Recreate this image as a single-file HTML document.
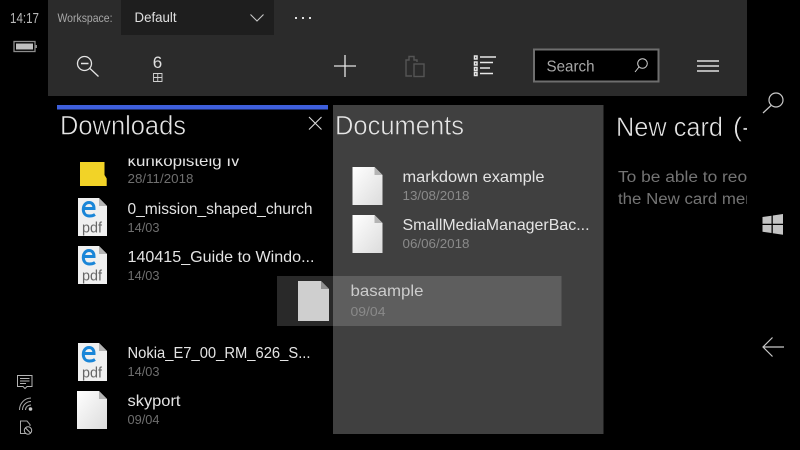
<!DOCTYPE html>
<html><head><meta charset="utf-8"><style>
html,body{margin:0;padding:0;background:#000;width:800px;height:450px;overflow:hidden}
svg{display:block;filter:blur(.35px)}
text{font-family:"Liberation Sans",sans-serif}
.h{stroke:#000;stroke-width:.55px;paint-order:normal}
.h2{stroke:#404040;stroke-width:.55px}
</style></head><body>
<svg width="800" height="450" viewBox="0 0 800 450" xmlns="http://www.w3.org/2000/svg">
<defs>
<linearGradient id="pg" x1="0" y1="0" x2="1" y2="1"><stop offset="0" stop-color="#fff"/><stop offset="1" stop-color="#dcdcdc"/></linearGradient>
<symbol id="doc" viewBox="0 0 30 38" overflow="visible">
<path d="M0 0H22L30 8V38H0Z" fill="url(#pg)"/><path d="M22 0L30 8H22Z" fill="#b4b4b4"/>
</symbol>
<symbol id="pdf" viewBox="0 0 29 38" overflow="visible">
<path d="M0 0H21L29 8V38H0Z" fill="#f0f0f0"/><path d="M21 0L29 8H21Z" fill="#b4b4b4"/>
<path d="M5.500 10.500H16C16 6.500 14 4.500 11 4.500C7.500 4.500 5.300 7.500 5.300 11.500C5.300 15.500 7.800 18 11.500 18C13.500 18 15.500 17.500 17 16.500" fill="none" stroke="#1a86d8" stroke-width="3"/>
<text x="14" y="34.500" font-size="15" fill="#666" text-anchor="middle" textLength="20" lengthAdjust="spacingAndGlyphs">pdf</text>
</symbol>
<clipPath id="c1"><rect x="60" y="158.500" width="270" height="20"/></clipPath>
<clipPath id="c3"><rect x="604" y="100" width="143" height="340"/></clipPath>
</defs>

<rect width="800" height="450" fill="#000"/>
<rect x="48" y="0" width="699" height="96" fill="#2b2b2b"/>
<rect x="121" y="0" width="153" height="35" fill="#1e1e1e"/>

<text x="10" y="23" font-size="15" fill="#b8b8b8" textLength="29" lengthAdjust="spacingAndGlyphs">14:17</text>
<rect x="14" y="41.500" width="21" height="10" fill="none" stroke="#8c8c8c" stroke-width="1.300"/>
<rect x="16" y="43.500" width="17" height="6" fill="#c0c0c0"/>
<rect x="35.500" y="45" width="1.500" height="3" fill="#8c8c8c"/>

<text x="57.500" y="22" font-size="12" fill="#a8a8a8" textLength="55" lengthAdjust="spacingAndGlyphs">Workspace:</text>
<text x="134.500" y="22" font-size="14" fill="#e0e0e0" textLength="42" lengthAdjust="spacingAndGlyphs">Default</text>
<path d="M250.500 14.500L257 21L263.500 14.500" fill="none" stroke="#c8c8c8" stroke-width="1.100"/>
<g fill="#e0e0e0"><rect x="295" y="17" width="2" height="2"/><rect x="302" y="17" width="2" height="2"/><rect x="309" y="17" width="2" height="2"/></g>

<circle cx="84.500" cy="63.500" r="7" fill="none" stroke="#e4e4e4" stroke-width="1.300"/>
<path d="M81 63.500H88.500" stroke="#e4e4e4" stroke-width="1.500"/>
<path d="M90 68.500L98.500 76.500" stroke="#e4e4e4" stroke-width="1.300"/>
<text x="157.500" y="68" font-size="17" fill="#e0e0e0" text-anchor="middle">6</text>
<path d="M153.500 73.500H162V81.500H153.500ZM157.750 73.500V81.500M153.500 77.500H162" fill="none" stroke="#d0d0d0" stroke-width="0.900"/>

<path d="M345 55V77M334 66H356" stroke="#e4e4e4" stroke-width="1.300"/>
<g fill="none" stroke="#555" stroke-width="1.400">
<path d="M417 62V60H414V56.500H409V60H406V76H412"/><rect x="414" y="64" width="10" height="12.500"/>
</g>
<g fill="none" stroke="#e8e8e8" stroke-width="1.500">
<rect x="474.500" y="56" width="2.500" height="3"/><rect x="474.500" y="62" width="2.500" height="3"/><rect x="474.500" y="67.500" width="2.500" height="3"/><rect x="474.500" y="72.500" width="2.500" height="3"/>
<path d="M480 57H496M480 62.500H493M480 68H490M480 73.500H493"/>
</g>

<rect x="534" y="49.500" width="124.500" height="32" fill="#000" stroke="#6e6e6e" stroke-width="2"/>
<text x="546.500" y="71.500" font-size="16" fill="#a8a8a8" textLength="48" lengthAdjust="spacingAndGlyphs">Search</text>
<circle cx="642.500" cy="63.500" r="4.800" fill="none" stroke="#d0d0d0" stroke-width="1"/>
<path d="M639 67L635 72" stroke="#d0d0d0" stroke-width="1"/>

<path d="M697 61H719M697 66H719M697 71H719" stroke="#e0e0e0" stroke-width="1.400"/>

<!-- Downloads column -->
<rect x="57" y="105" width="271" height="4.500" fill="#3e5fdc"/>
<text class="h" x="60" y="134.500" font-size="27" fill="#e6e6e6" textLength="126" lengthAdjust="spacingAndGlyphs">Downloads</text>
<path d="M309 117L321.500 129.500M321.500 117L309 129.500" stroke="#d8d8d8" stroke-width="1.100"/>

<g clip-path="url(#c1)">
<text x="127.500" y="166" font-size="16" fill="#e4e4e4" textLength="112" lengthAdjust="spacingAndGlyphs">kuhkopisteig Iv</text>
</g>
<path d="M80 162H104.500V175L106.700 178.500V186H80Z" fill="#f2d327"/>
<text x="127.500" y="183" font-size="13" fill="#6f6f6f" textLength="66" lengthAdjust="spacingAndGlyphs">28/11/2018</text>

<use href="#pdf" x="78" y="198" width="29" height="38"/>
<text x="127.500" y="214" font-size="16" fill="#e4e4e4" textLength="185" lengthAdjust="spacingAndGlyphs">0_mission_shaped_church</text>
<text x="127.500" y="232" font-size="13" fill="#6f6f6f" textLength="32" lengthAdjust="spacingAndGlyphs">14/03</text>

<use href="#pdf" x="78" y="246" width="29" height="38"/>
<text x="127.500" y="262" font-size="16" fill="#e4e4e4" textLength="187" lengthAdjust="spacingAndGlyphs">140415_Guide to Windo...</text>
<text x="127.500" y="280" font-size="13" fill="#6f6f6f" textLength="32" lengthAdjust="spacingAndGlyphs">14/03</text>

<use href="#pdf" x="78" y="343" width="29" height="38"/>
<text x="127.500" y="358" font-size="16" fill="#e4e4e4" textLength="183" lengthAdjust="spacingAndGlyphs">Nokia_E7_00_RM_626_S...</text>
<text x="127.500" y="376" font-size="13" fill="#6f6f6f" textLength="32" lengthAdjust="spacingAndGlyphs">14/03</text>

<use href="#doc" x="77" y="391" width="30" height="38"/>
<text x="127.500" y="406" font-size="16" fill="#e4e4e4" textLength="53" lengthAdjust="spacingAndGlyphs">skyport</text>
<text x="127.500" y="424" font-size="13" fill="#6f6f6f" textLength="32" lengthAdjust="spacingAndGlyphs">09/04</text>

<!-- Documents column -->
<rect x="333" y="105" width="270.500" height="329" fill="#404040"/>
<text class="h2" x="335" y="134.500" font-size="27" fill="#e6e6e6" textLength="129" lengthAdjust="spacingAndGlyphs">Documents</text>

<use href="#doc" x="352.500" y="167" width="30" height="38"/>
<text x="402.500" y="182" font-size="16" fill="#e4e4e4" textLength="142" lengthAdjust="spacingAndGlyphs">markdown example</text>
<text x="402.500" y="200" font-size="13" fill="#8a8a8a" textLength="67" lengthAdjust="spacingAndGlyphs">13/08/2018</text>

<use href="#doc" x="352.500" y="215" width="30" height="38"/>
<text x="402.500" y="230" font-size="16" fill="#e4e4e4" textLength="187" lengthAdjust="spacingAndGlyphs">SmallMediaManagerBac...</text>
<text x="402.500" y="248" font-size="13" fill="#8a8a8a" textLength="67" lengthAdjust="spacingAndGlyphs">06/06/2018</text>

<!-- Drag ghost -->
<rect x="277" y="276" width="284.500" height="50" fill="#fff" fill-opacity="0.160"/>
<path d="M298 281H321L329 289V321H298Z" fill="#cfcfcf"/><path d="M321 281L329 289H321Z" fill="#8e8e8e"/>
<text x="350.500" y="296" font-size="16" fill="#cccccc" textLength="73" lengthAdjust="spacingAndGlyphs">basample</text>
<text x="350.500" y="316" font-size="13" fill="#8a8a8a" textLength="35" lengthAdjust="spacingAndGlyphs">09/04</text>

<!-- New card column -->
<g clip-path="url(#c3)">
<text class="h" x="616" y="136" font-size="27" fill="#e6e6e6" textLength="107" lengthAdjust="spacingAndGlyphs">New card</text>
<text class="h" x="733" y="136" font-size="27" fill="#e6e6e6" textLength="18" lengthAdjust="spacingAndGlyphs">(-</text>
<text x="618" y="182" font-size="15.500" fill="#747474" textLength="158" lengthAdjust="spacingAndGlyphs">To be able to reopen</text>
<text x="618" y="204" font-size="15.500" fill="#747474" textLength="146" lengthAdjust="spacingAndGlyphs">the New card menu</text>
</g>

<!-- Status icons -->
<path d="M17.500 375.500H32V386.500H27L25 388.500L23 386.500H17.500Z" fill="none" stroke="#b4b4b4" stroke-width="1"/>
<path d="M20 378.500H29.500M20 381H29.500M20 383.500H26" stroke="#b4b4b4" stroke-width="1"/>
<g fill="none" stroke="#a8a8a8" stroke-width="1"><path d="M19.500 410C19.500 403 25 398 31 398"/><path d="M22.500 410C22.500 405 26.500 401.500 31 401.500"/><path d="M25.500 410C25.500 407 28 405 31 405"/></g>
<circle cx="30.500" cy="409" r="1.800" fill="#c8c8c8"/>
<path d="M26 433.500H20.500V421H27L30 424.500V426" fill="none" stroke="#a8a8a8" stroke-width="1"/>
<circle cx="28" cy="430.500" r="3.700" fill="none" stroke="#b8b8b8" stroke-width="1"/>
<path d="M25.500 428L30.500 433" stroke="#b8b8b8" stroke-width="1"/>

<!-- Nav bar -->
<circle cx="776" cy="100" r="7" fill="none" stroke="#c8c8c8" stroke-width="1.200"/>
<path d="M771 105.500L763 113" stroke="#c8c8c8" stroke-width="1.200"/>
<g fill="#c4c4c4">
<path d="M762.500 217L771.500 215.700V223.800H762.500Z"/><path d="M772.800 215.500L783 214V223.800H772.800Z"/>
<path d="M762.500 225H771.500V233L762.500 231.800Z"/><path d="M772.800 225H783V234.800L772.800 233.300Z"/>
</g>
<path d="M784 347H763M772.500 337.500L763 347L772.500 356.500" fill="none" stroke="#c8c8c8" stroke-width="1.200"/>
</svg>
</body></html>
